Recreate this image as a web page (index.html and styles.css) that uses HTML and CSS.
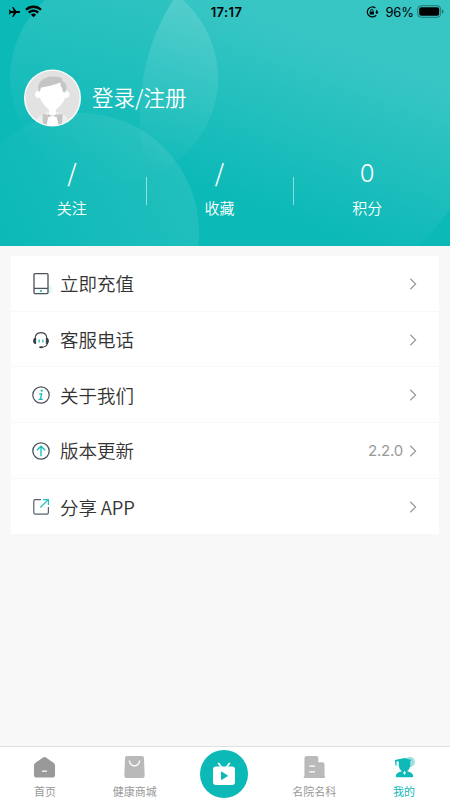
FILE: index.html
```html
<!DOCTYPE html>
<html lang="zh-CN">
<head>
<meta charset="utf-8">
<meta name="viewport" content="width=device-width, initial-scale=1">
<title>我的</title>
<link rel="stylesheet" href="styles.css">
</head>
<body>
<header class="hero">
  <svg class="hero-bg" viewBox="0 0 450 246" aria-hidden="true">
    <defs>
      <linearGradient id="ga" x1="0.65" y1="0" x2="0.4" y2="1"><stop offset="0" stop-color="#fff" stop-opacity=".16"/><stop offset=".9" stop-color="#fff" stop-opacity=".01"/></linearGradient>
      <linearGradient id="gb" gradientUnits="userSpaceOnUse" x1="350" y1="55" x2="290" y2="220"><stop offset="0" stop-color="#fff" stop-opacity=".18"/><stop offset="1" stop-color="#fff" stop-opacity="0"/></linearGradient>
      <linearGradient id="gc" x1="1" y1=".2" x2=".2" y2=".6"><stop offset="0" stop-color="#fff" stop-opacity=".1"/><stop offset="1" stop-color="#fff" stop-opacity="0"/></linearGradient>
    </defs>
    <circle cx="114" cy="78" r="104" fill="url(#ga)"/>
    <path d="M173 0A217 217 0 0 0 197 262H397A217 217 0 0 0 450 209V0Z" fill="url(#gb)"/>
    <circle cx="80" cy="232" r="119" fill="url(#gc)"/>
  </svg>
  <div class="status">
    <div class="status-side">
      <svg width="13" height="12" viewBox="0 0 13 12"><path d="M12.2 6c0-.5-.5-.9-1.2-.9H8.3L5.4.9H4.200l1.400 4.200H3L1.800 3.700H.8L1.500 6 .8 8.300h1L3 6.900h2.600l-1.400 4.200h1.200l2.900-4.200H11c.7 0 1.200-.4 1.200-.9Z"/></svg>
      <svg class="wifi" width="17" height="13" viewBox="0 0 17 13"><g fill="none" stroke="#000" stroke-width="2.300"><path d="M1 4.800a10.700 10.700 0 0 1 15 0"/><path d="M3.800 7.600a6.700 6.700 0 0 1 9.400 0"/></g><path d="M5.900 9.700a3.800 3.800 0 0 1 5.200 0L8.500 12.300Z"/></svg>
    </div>
    <div class="time">17:17</div>
    <div class="status-side right">
      <svg width="13" height="12" viewBox="0 0 13 12"><path d="M9.400 2A5 5 0 1 0 10.200 9.100M10.700 7.500a5 5 0 0 0-.2-3.600" fill="none" stroke="#000" stroke-width="1.200"/><path d="M9.200 5.700h3.400l-1.700 2.200ZM3.700 5.400h4.200v3.200H3.700Z"/><path d="M4.600 5.600V4.500a1.200 1.200 0 0 1 2.400 0v1.100" fill="none" stroke="#000" stroke-width=".9"/></svg>
      <span class="percent">96%</span>
      <svg width="27" height="13" viewBox="0 0 27 13"><rect x=".7" y=".7" width="23" height="11.600" rx="3.500" fill="none" stroke="#000" stroke-opacity=".4"/><rect x="2.200" y="2.200" width="20" height="8.600" rx="2"/><path d="M25 4.600q1.500.5 1.500 2t-1.500 2Z" opacity=".45"/></svg>
    </div>
  </div>
  <div class="profile">
    <svg class="avatar" width="58" height="58" viewBox="0 0 58 58">
      <defs><clipPath id="av"><circle cx="28.500" cy="29" r="27.200"/></clipPath></defs>
      <circle cx="28.500" cy="29" r="28.500" fill="#fff"/><circle cx="28.500" cy="29" r="27.200" fill="#e2e2e2"/>
      <g clip-path="url(#av)">
        <path d="M11 58l3-10 9-5h11l9 5 3 10Z" fill="#eee"/>
        <path d="M18.500 45l5 .5L25 58h-6ZM38.500 45l-5 .5L32 58h6Z" fill="#c5c5c5"/>
        <path d="M25 38h7v7l3 13H22l3-13Z" fill="#fff"/>
        <path d="m24 45 4.500 2 4.500-2v3.500l-4.500-2-4.500 2Z" fill="#c5c5c5"/>
        <path d="M16.500 19 37 12l4.500 8v8q-2 6-6 9.500-3.500 4-7 4t-7-4q-4-3.500-6-9.500Z" fill="#fff"/><circle cx="14.500" cy="25.500" r="3.400" fill="#fff"/><circle cx="42" cy="25.500" r="3.400" fill="#fff"/>
        <path d="M15.500 23.500Q12.500 17 16 13 20 7.500 29 7.500q6-.3 9 1.500l.3 3Q43.500 14.500 42.500 20l-1.500 3.500-2-.5q-.2-4-2.500-6.500V13.500Q26 17.500 17 18.500Z" fill="#c5c5c5"/>
      </g>
    </svg>
    <div class="login">登录/注册</div>
  </div>
  <div class="stats">
    <div class="stat"><b>/</b><span>关注</span></div>
    <div class="stat"><b>/</b><span>收藏</span></div>
    <div class="stat"><b class="number">0</b><span>积分</span></div>
  </div>
</header>
<main class="menu">
  <div class="row">
    <svg class="icon" viewBox="0 0 24 24"><circle cx="19.500" cy="17.500" r="4.300" fill="#e3f7f7"/><g fill="none" stroke="#4b5259" stroke-width="1.300"><rect x="5" y="1.600" width="14" height="20" rx="1" fill="#fff"/><path d="M5 16.400h14"/></g><circle cx="12" cy="19" r="1.100" fill="#12bcb9"/></svg>
    <span>立即充值</span><svg class="chev" viewBox="0 0 8 12"><path d="M1.300.8 6.600 6l-5.300 5.200"/></svg>
  </div>
  <div class="row">
    <svg class="icon" viewBox="0 0 24 24"><path d="M6 11.500Q6 4.600 12 4.600t6 6.900M18.600 15q-.8 4-5.800 4.400" fill="none" stroke="#3c444c" stroke-width="1.100"/><path d="M6.700 10v5.700q-2.200 0-2.200-2.800T6.700 10ZM17.300 10v5.700q2.200 0 2.200-2.800T17.300 10Z" fill="#303941" stroke="#303941" stroke-width=".8"/><ellipse cx="12" cy="19.300" rx="1.900" ry="1" fill="#303941"/><path d="M9.400 11.400h1.600v3H9.400ZM13 11.400h1.600v3H13Z" fill="#42cbc9"/></svg>
    <span>客服电话</span><svg class="chev" viewBox="0 0 8 12"><path d="M1.300.8 6.600 6l-5.300 5.200"/></svg>
  </div>
  <div class="row">
    <svg class="icon" viewBox="0 0 24 24"><circle cx="12" cy="12" r="8.200" fill="none" stroke="#4b5259" stroke-width="1.200"/><circle cx="12.700" cy="7.700" r="1.100" fill="#12bcb9"/><path d="M10.200 10.800h2.400L11.500 16.300h2.200M9.600 16.300h2" fill="none" stroke="#12bcb9" stroke-width="1.300"/></svg>
    <span>关于我们</span><svg class="chev" viewBox="0 0 8 12"><path d="M1.300.8 6.600 6l-5.300 5.200"/></svg>
  </div>
  <div class="row">
    <svg class="icon" viewBox="0 0 24 24"><circle cx="12" cy="12" r="8.200" fill="none" stroke="#4b5259" stroke-width="1.300"/><path d="M12 17.300V7.400M7.900 11.300 12 7.200l4.100 4.100" fill="none" stroke="#12bcb9" stroke-width="1.300"/></svg>
    <span>版本更新</span><em>2.2.0</em><svg class="chev" viewBox="0 0 8 12"><path d="M1.300.8 6.600 6l-5.300 5.200"/></svg>
  </div>
  <div class="row">
    <svg class="icon" viewBox="0 0 24 24"><path d="M12 4.600H6.400Q4.800 4.600 4.800 6.200v11.400q0 1.600 1.600 1.600h11.400q1.600 0 1.600-1.600V12" fill="none" stroke="#59616a" stroke-width="1.200"/><path d="M11.300 12.500 19 4.800M14 4.600h5.400V10" fill="none" stroke="#22c1be" stroke-width="1.200"/></svg>
    <span class="share">分享 APP</span><svg class="chev" viewBox="0 0 8 12"><path d="M1.300.8 6.600 6l-5.300 5.200"/></svg>
  </div>
</main>
<nav class="tabs">
  <div class="tab"><svg viewBox="0 0 24 24"><path d="M1 10q0-2 1.600-3L10.500 1.500q1.500-1 3 0L21.400 7Q23 8 23 10v9.500q0 3-3 3H4q-3 0-3-3Z" fill="#999"/><path d="M9.500 15.800h5" stroke="#fff" stroke-width="1.300"/></svg><span>首页</span></div>
  <div class="tab"><svg viewBox="0 0 24 24"><path d="M4.200 0h15.600q2 0 2.100 2l.7 18.800q0 2.200-2.200 2.200H3.600q-2.200 0-2.200-2.200L2.100 2q.1-2 2.100-2Z" fill="#b9b9b9"/><path d="M6.500 4.700q1 5.500 5.500 5.500t5.500-5.500" fill="none" stroke="#fff" stroke-width="1.400"/></svg><span>健康商城</span></div>
  <div class="tab center"><svg viewBox="0 0 48 48"><circle cx="24" cy="24" r="24" fill="#0bb9b7"/><rect x="13" y="16.500" width="22" height="18.500" rx="3" fill="#fff"/><path d="m18.200 13 3.300 4M29.800 13l-3.300 4" fill="none" stroke="#fff" stroke-width="1.800"/><path d="M21.500 22v7.500l6-3.700Z" fill="#0bb9b7" stroke="#0bb9b7" stroke-linejoin="round"/></svg></div>
  <div class="tab"><svg viewBox="0 0 24 24"><path d="M1.500 21.500V2q0-2 2-2H14q2 0 2 2v4.500h4.500q2 0 2 2v13H23V23H.8v-1.500Z" fill="#bababa"/><path d="M6.500 10.500h6M6.500 16.500h6" stroke="#fff" stroke-width="1.300"/></svg><span>名院名科</span></div>
  <div class="tab active"><svg viewBox="0 0 24 24"><circle cx="17.500" cy="6.200" r="5.400" fill="#a0e0df"/><path d="M2 4.300 12 2l7.500 2.300-1.500 1.200v5q-.5 3.500-3.200 5.300 5.900 1.400 6.200 4.500.3 1.900-1 1.900H4q-1.300 0-1-1.900.3-3.100 6.200-4.500Q6.400 14 6 10.500V5.900l-2.200-.6V10H2.600Z" fill="#0fb9b7"/><path d="m12 15.600 1.500 1.900-1.500 2.400-1.500-2.400Z" fill="#fff"/></svg><span>我的</span></div>
</nav>
</body>
</html>
```
FILE: styles.css
```css
* { box-sizing: border-box; }
body { margin: 0; height: 800px; display: flex; flex-direction: column; background: #f8f8f8; color: #333; font-family: "Noto Sans CJK SC", sans-serif; overflow: hidden; }
svg { display: block; flex: none; }
.hero { position: relative; height: 246px; background: #0bb9b7; color: #fff; overflow: hidden; }
.hero-bg { position: absolute; inset: 0; width: 450px; height: 246px; }
.status, .profile, .stats { position: relative; }
.status { display: flex; align-items: center; height: 23px; padding: 0 6px 0 8px; color: #000; font-family: Inter, sans-serif; }
.status-side { flex: 1; display: flex; align-items: center; }
.wifi { margin-left: 4px; margin-top: -1px; }
.right { justify-content: flex-end; }
.right svg:first-child { margin-right: 6px; }
.time { font-size: 13px; font-weight: 600; letter-spacing: .4px; margin-left: 1px; }
.percent { font-size: 13px; letter-spacing: -.1px; margin-right: 3px; }
.profile { display: flex; align-items: center; padding: 0 24px; height: 58px; margin-top: 46px; }
.login { margin-left: 10px; margin-top: -2px; font-size: 21.5px; font-weight: 350; line-height: 30px; }
.stats { display: flex; width: 443px; margin: 32px 0 0 -2px; }
.stat { flex: 1; position: relative; display: flex; flex-direction: column; align-items: center; }
.stat + .stat::before { content: ""; position: absolute; left: 0; top: 18px; width: 1px; height: 28px; background: rgba(255,255,255,.5); }
.stat b { font-size: 24px; font-weight: 350; line-height: 30px; margin: -2px 0 2px; }
.stat .number { font-family: Inter, sans-serif; font-size: 24px; font-weight: 300; margin: 0; }
.stat span { font-size: 15px; font-weight: 350; line-height: 22px; margin-top: 8px; }
.menu { width: 428px; margin: 10px 11px 0; background: #fff; }
.row { display: flex; align-items: center; height: 55.7px; padding: 1px 22px 0 17.5px; border-bottom: 1px solid #f8f8f8; font-size: 18.5px; }
.row:last-child { border: 0; }
.row .icon { width: 24px; height: 24px; margin-right: 7.5px; }
.row span { flex: 1; font-weight: 350; margin-top: -1px; }
.row .share { letter-spacing: -.1px; }
.row em { font: 400 15px Inter, sans-serif; color: #999; margin-right: 6px; letter-spacing: -.2px; }
.chev { width: 8px; height: 12px; fill: none; stroke: #999; stroke-width: 1.2; }
.tabs { height: 54px; margin-top: auto; display: flex; background: #fff; border-top: 1px solid #dfdfdf; }
.tab { width: 89.8px; display: flex; flex-direction: column; align-items: center; padding-top: 9px; color: #999; font-size: 11px; line-height: 16px; }
.tab svg { width: 23px; height: 23px; }
.tab span { margin-top: 4px; }
.center { padding-top: 3px; }
.center svg { width: 48px; height: 48px; }
.active { color: #0fb9b7; }
```
